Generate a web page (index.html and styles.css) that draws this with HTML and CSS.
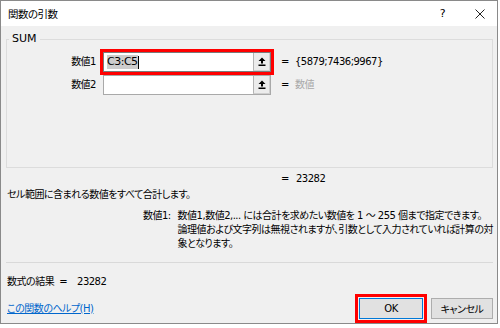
FILE: index.html
```html
<!DOCTYPE html>
<html lang="ja">
  <head>
    <meta charset="UTF-8" />
    <meta name="viewport" content="width=device-width, initial-scale=1.0" />
    <link rel="stylesheet" href="styles.css">
    <title>関数の引数</title>
  </head>

  <body>
    <div class="window">
      <div class="titlebar">
        <span class="title">関数の引数</span>
        <span class="help">?</span>
        <svg class="close" width="10" height="10" viewBox="0 0 10 10">
          <path d="M0.5 0.5 L9.5 9.5 M9.5 0.5 L0.5 9.5" stroke="#222" stroke-width="1" fill="none" />
        </svg>
      </div>

      <div class="content">
        <fieldset class="group">
          <legend>SUM</legend>
          <div class="args">
            <div class="arg-label">数値1</div>
            <div class="ref marked">
              <span class="ref-text"><span class="sel">C3:C5</span><span class="caret"></span></span>
              <span class="ref-btn">
                <svg width="8" height="9" viewBox="0 0 8 9"><path d="M4 0.5 L7.5 4 H5 V6.5 H3 V4 H0.5 Z M0.5 7.5 H7.5 V9 H0.5 Z" fill="#000" /></svg>
              </span>
            </div>
            <div class="eq">=</div>
            <div class="arg-value">{5879;7436;9967}</div>

            <div class="arg-label">数値2</div>
            <div class="ref">
              <span class="ref-text"></span>
              <span class="ref-btn">
                <svg width="8" height="9" viewBox="0 0 8 9"><path d="M4 0.5 L7.5 4 H5 V6.5 H3 V4 H0.5 Z M0.5 7.5 H7.5 V9 H0.5 Z" fill="#000" /></svg>
              </span>
            </div>
            <div class="eq">=</div>
            <div class="arg-value hint">数値</div>
          </div>
        </fieldset>

        <div class="total"><span class="eq">=</span>23282</div>

        <p class="summary">セル範囲に含まれる数値をすべて合計します。</p>

        <div class="arg-help">
          <span class="arg-help-name">数値1:</span>
          <span class="arg-help-text">数値1,数値2,... には合計を求めたい数値を 1 ～ 255 個まで指定できます。<br>論理値および文字列は無視されますが、引数として入力されていれば計算の対<br>象となります。</span>
        </div>

        <hr class="sep">

        <div class="formula">数式の結果<span class="formula-eq">=</span>23282</div>

        <div class="footer">
          <a href="#" class="help-link">この関数のヘルプ(H)</a>
          <div class="buttons">
            <button class="btn btn-default marked">OK</button>
            <button class="btn">キャンセル</button>
          </div>
        </div>
      </div>
    </div>
  </body>
</html>
```

FILE: styles.css
```css
body {
  margin: 0;
  background-color: #fff;
  font-family: "DejaVu Sans", "Noto Sans CJK JP", sans-serif;
  font-size: 10px;
  letter-spacing: -0.5px;
  font-feature-settings: "palt";
  color: #000;
}

.window {
  box-sizing: border-box;
  width: 498px;
  height: 324px;
  border: 1px solid #8a8a8a;
  background-color: #f0f0f0;
  overflow: hidden;
}

.titlebar {
  height: 25px;
  background-color: #fff;
  display: flex;
  align-items: center;
  font-size: 10.5px;
}

.title {
  padding-left: 7px;
}

.help {
  margin-left: auto;
  font-size: 11px;
}

.close {
  margin: 0 12px 0 30px;
}

.content {
  padding: 0 4px 0 5px;
  line-height: 14px;
}

/* 引数のグループ */
.group {
  margin: 6px 0 0;
  padding: 6px 0 72px;
  border: 1px solid #dcdcdc;
  min-width: 0;
}

.group legend {
  padding: 0 3px;
  margin-left: 2px;
  font-size: 11px;
  line-height: 14px;
  letter-spacing: 0;
}

.args {
  display: grid;
  grid-template-columns: 96px 168px 24px 1fr;
  grid-auto-rows: 20px;
  row-gap: 3px;
  align-items: center;
}

.arg-label {
  text-align: right;
  padding-right: 7px;
}

.ref {
  box-sizing: border-box;
  height: 20px;
  border: 1px solid #a9a9a9;
  background-color: #fff;
  display: flex;
  align-items: stretch;
}

.ref.marked {
  border-color: #7a7a7a;
}

.marked {
  outline: 3px solid #f00;
}

.ref-text {
  flex: 1;
  padding-left: 3px;
  display: flex;
  align-items: center;
}

.sel {
  background-color: #cdcdcd;
  font-size: 11px;
  line-height: 14px;
}

.caret {
  display: inline-block;
  width: 1px;
  height: 13px;
  background-color: #000;
}

.ref-btn {
  box-sizing: border-box;
  width: 17px;
  border-left: 1px solid #b4b4b4;
  border-right: 1px solid #cfcfcf;
  border-bottom: 1px solid #cfcfcf;
  background-color: #ececec;
  display: flex;
  align-items: center;
  justify-content: center;
}

.eq {
  padding-left: 10px;
}

.arg-value {
  white-space: nowrap;
}

.hint {
  color: #a8a8a8;
}

.total {
  margin-top: 4px;
  padding-left: 265px;
  display: flex;
}

.total .eq {
  width: 15px;
}

.summary {
  margin: 2px 0 0 1px;
}

.arg-help {
  margin-top: 7px;
  padding-left: 137px;
  display: flex;
  white-space: nowrap;
}

.arg-help-name {
  width: 39px;
}

.sep {
  margin: 11px 0 0;
  border: none;
  border-top: 1px solid #d9d9d9;
}

.formula {
  margin: 12px 0 0 1px;
}

.formula-eq {
  margin: 0 10px 0 5px;
}

.footer {
  margin-top: 9px;
  display: flex;
  align-items: center;
}

.help-link {
  color: #0066cc;
  margin-left: 1px;
}

.buttons {
  margin-left: auto;
  display: flex;
  gap: 8px;
}

.btn {
  box-sizing: border-box;
  height: 21px;
  width: 62px;
  border: 1px solid #adadad;
  background-color: #e1e1e1;
  font-family: inherit;
  font-size: 10px;
  letter-spacing: -0.5px;
  font-feature-settings: "palt";
  padding: 0;
}

.btn-default {
  width: 64px;
  border-color: #0078d7;
  outline-offset: 1px;
}
```
